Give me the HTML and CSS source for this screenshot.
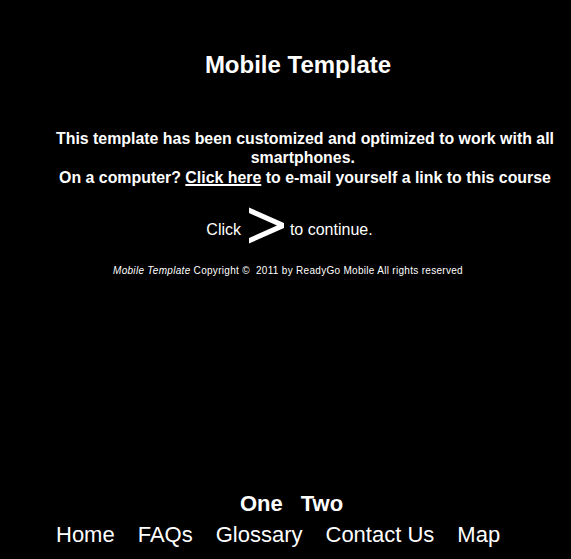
FILE: index.html
```html
<!DOCTYPE html>
<html lang="en">
<head>
<meta charset="utf-8">
<title>Mobile Template</title>
<link rel="stylesheet" href="styles.css">
</head>
<body>
<div class="page">
  <h1 class="title">Mobile Template</h1>
  <p class="intro">This template has been customized and optimized to work with all smartphones.&nbsp;<br>On a computer? <a href="#" class="mail-link">Click here</a> to e-mail yourself a link to this course</p>
  <p class="continue">Click <a href="#" class="next" aria-label="next"><svg class="chevron" width="40" height="37" viewBox="0 0 40 37"><polygon points="4,0.5 39,16 39,21 4,36.5 4,31 32,18.5 4,6" fill="#fff"/></svg></a> to continue.</p>
  <p class="copyright"><em>Mobile Template</em> Copyright ©&nbsp; 2011 by ReadyGo Mobile All rights reserved</p>
  <div class="sections">
    <a href="#" class="section-link">One</a>
    <a href="#" class="section-link">Two</a>
  </div>
  <nav class="nav">
    <a href="#" class="nav-link">Home</a>
    <a href="#" class="nav-link">FAQs</a>
    <a href="#" class="nav-link">Glossary</a>
    <a href="#" class="nav-link">Contact Us</a>
    <a href="#" class="nav-link">Map</a>
  </nav>
</div>
</body>
</html>
```

FILE: styles.css
```css
html, body {
  margin: 0;
  padding: 0;
  background: #000;
}

body {
  color: #fff;
  font-family: "Liberation Sans", Arial, sans-serif;
}

.page {
  display: flow-root;
}

a {
  color: #fff;
  text-decoration: none;
}

.title {
  margin: 51px 0 0;
  padding-left: 25px;
  font-size: 24px;
  line-height: 28px;
  font-weight: bold;
  text-align: center;
}

.intro {
  margin: 50px 0 0;
  padding: 0 1px 0 40px;
  font-size: 15.9px;
  line-height: 19.3px;
  font-weight: bold;
  text-align: center;
}

.mail-link {
  text-decoration: underline;
  text-decoration-thickness: 2px;
}

.continue {
  margin: 20px 0 0;
  padding-left: 8px;
  font-size: 16px;
  line-height: 19px;
  text-align: center;
}

.chevron {
  vertical-align: -9px;
}

.copyright {
  margin: 21px 0 0;
  padding-left: 5px;
  font-size: 10px;
  line-height: 12px;
  letter-spacing: 0.3px;
  text-align: center;
}

.sections {
  margin-top: 214px;
  padding-left: 12px;
  display: flex;
  justify-content: center;
  gap: 18px;
  font-size: 22px;
  line-height: 25px;
  font-weight: bold;
}

.nav {
  margin-top: 6px;
  padding-left: 56px;
  display: flex;
  gap: 23px;
  font-size: 22px;
  line-height: 25px;
}
```
